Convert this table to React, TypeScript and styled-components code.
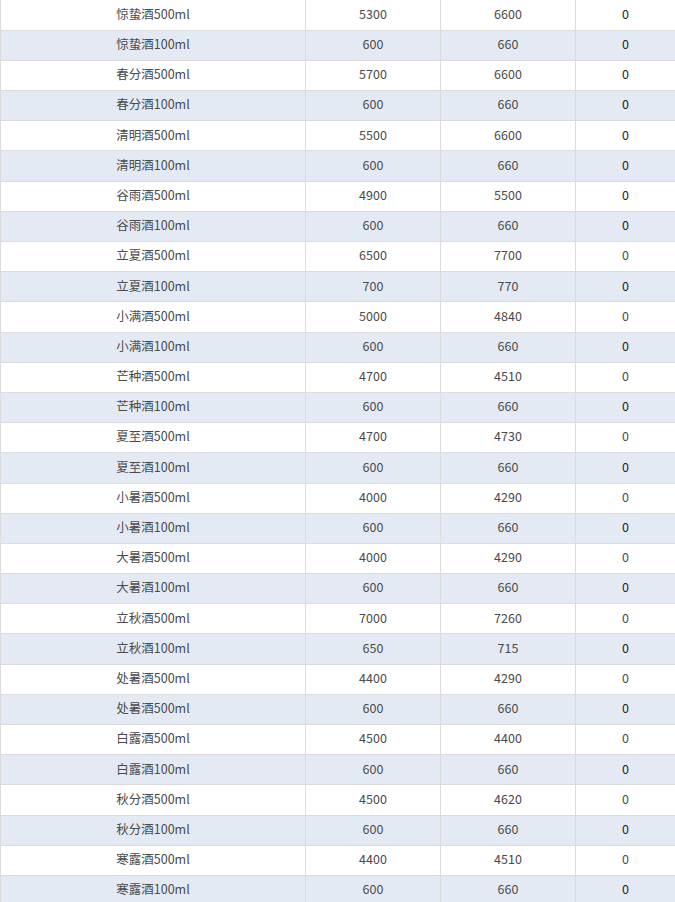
import styled, { createGlobalStyle } from "styled-components";

const GlobalStyle = createGlobalStyle`
  html, body {
    margin: 0;
    padding: 0;
    background: #fff;
  }
`;

const Table = styled.table`
  width: 675px;
  border-collapse: collapse;
  table-layout: fixed;
  font-family: "Noto Sans CJK SC", "Noto Sans", sans-serif;
  font-size: 12.5px;
  color: #444;
`;

const Col = styled.col<{ $width: number }>`
  width: ${(p) => p.$width}px;
`;

const Row = styled.tr<{ $striped: boolean }>`
  background: ${(p) => (p.$striped ? "#e4eaf4" : "#fff")};
`;

const Cell = styled.td<{ $dark?: boolean }>`
  box-sizing: border-box;
  height: 30.2px;
  padding: 0 0 2px;
  text-align: center;
  vertical-align: middle;
  border: 1px solid #dcdcdc;
  border-top: none;
  color: ${(p) => (p.$dark ? "#1c1c2a" : "#4a4a4a")};
  line-height: 1;
`;

type Item = [string, number, number, boolean];

const items: Item[] = [
  ["惊蛰酒500ml", 5300, 6600, true],
  ["惊蛰酒100ml", 600, 660, true],
  ["春分酒500ml", 5700, 6600, true],
  ["春分酒100ml", 600, 660, true],
  ["清明酒500ml", 5500, 6600, true],
  ["清明酒100ml", 600, 660, true],
  ["谷雨酒500ml", 4900, 5500, true],
  ["谷雨酒100ml", 600, 660, true],
  ["立夏酒500ml", 6500, 7700, false],
  ["立夏酒100ml", 700, 770, true],
  ["小满酒500ml", 5000, 4840, false],
  ["小满酒100ml", 600, 660, true],
  ["芒种酒500ml", 4700, 4510, false],
  ["芒种酒100ml", 600, 660, true],
  ["夏至酒500ml", 4700, 4730, false],
  ["夏至酒100ml", 600, 660, true],
  ["小暑酒500ml", 4000, 4290, false],
  ["小暑酒100ml", 600, 660, true],
  ["大暑酒500ml", 4000, 4290, false],
  ["大暑酒100ml", 600, 660, true],
  ["立秋酒500ml", 7000, 7260, false],
  ["立秋酒100ml", 650, 715, true],
  ["处暑酒500ml", 4400, 4290, false],
  ["处暑酒500ml", 600, 660, true],
  ["白露酒500ml", 4500, 4400, false],
  ["白露酒100ml", 600, 660, true],
  ["秋分酒500ml", 4500, 4620, false],
  ["秋分酒100ml", 600, 660, true],
  ["寒露酒500ml", 4400, 4510, false],
  ["寒露酒100ml", 600, 660, true],
];

const App = () => {
  return (
    <>
      <GlobalStyle />
      <Table>
        <colgroup>
          <Col $width={305} />
          <Col $width={135} />
          <Col $width={135} />
          <Col $width={100} />
        </colgroup>
        <tbody>
          {items.map(([name, cost, price, dark], i) => (
            <Row key={i} $striped={i % 2 === 1}>
              <Cell>{name}</Cell>
              <Cell>{cost}</Cell>
              <Cell>{price}</Cell>
              <Cell $dark={dark}>0</Cell>
            </Row>
          ))}
        </tbody>
      </Table>
    </>
  );
};

export default App;
